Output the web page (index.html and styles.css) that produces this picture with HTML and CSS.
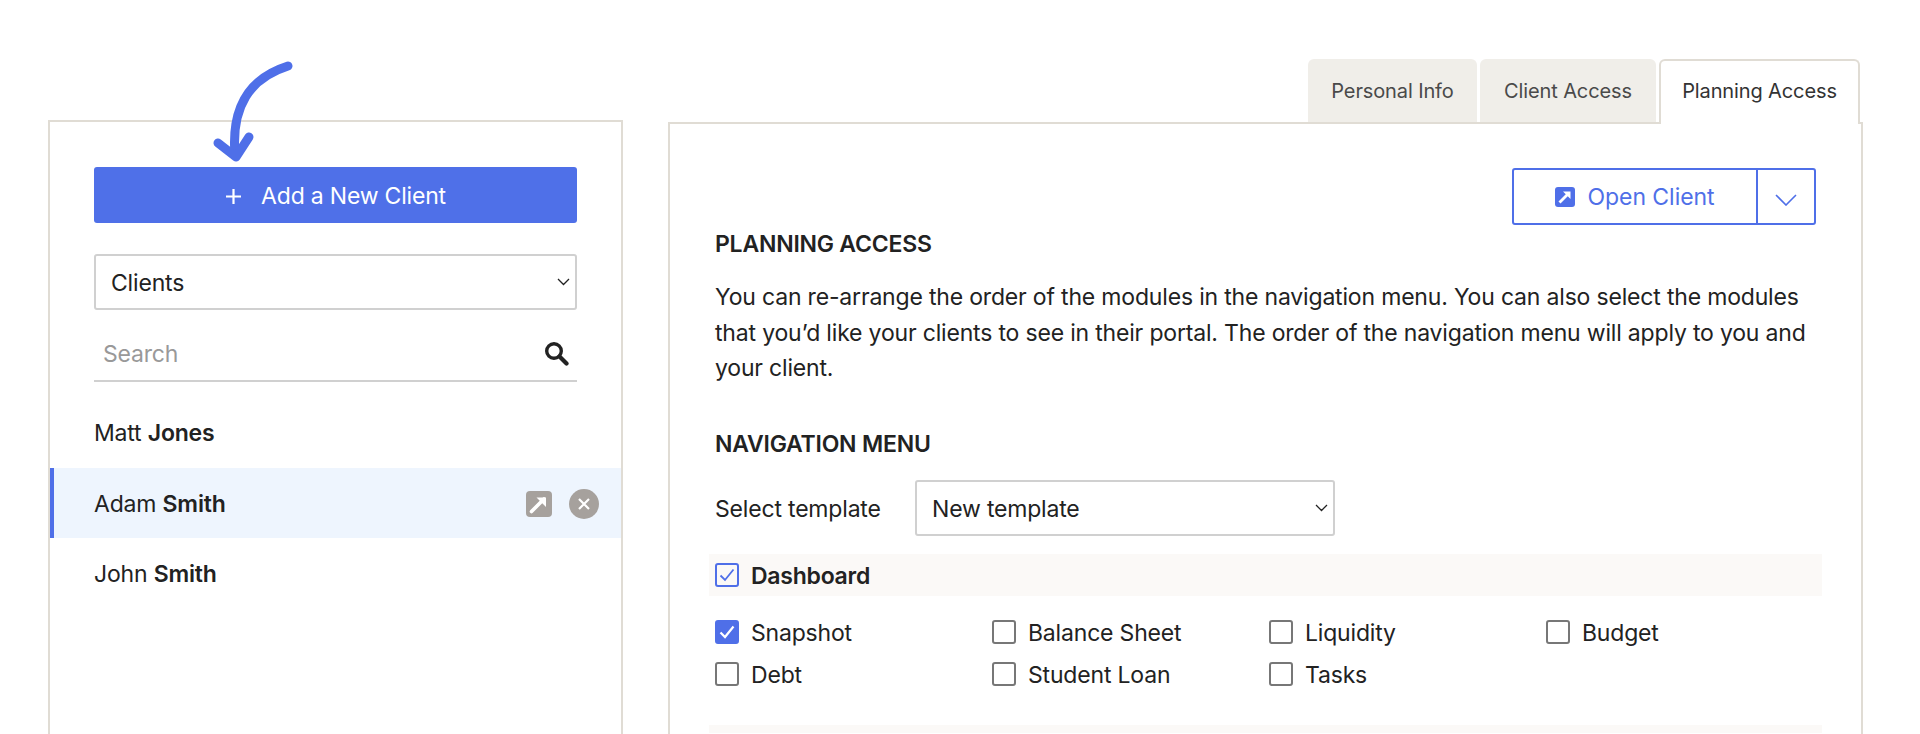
FILE: index.html
```html
<!DOCTYPE html>
<html lang="en">
<head>
<meta charset="utf-8">
<title>Planning Access</title>
<link rel="stylesheet" href="styles.css">
</head>
<body>
<svg class="arrow" width="90" height="115" viewBox="210 50 90 115" fill="none" aria-hidden="true">
  <path d="M288 66C250 78 231 106 235 155" stroke="#4f6fe8" stroke-width="9" stroke-linecap="round"/>
  <path d="M218 143L236 157L249 137" stroke="#4f6fe8" stroke-width="9" stroke-linecap="round" stroke-linejoin="round"/>
</svg>
<main class="page">
  <aside class="side">
    <button class="add"><svg width="17" height="17" viewBox="0 0 17 17"><path d="M8.500 1v15M1 8.500h15" stroke="#fff" stroke-width="2.200"/></svg><span>Add a New Client</span></button>
    <div class="select full"><span class="txt">Clients</span><svg width="13" height="8" viewBox="0 0 13 8" fill="none"><path d="M1 1l5.500 5.500L12 1" stroke="#222" stroke-width="1.300"/></svg></div>
    <div class="search"><span class="txt">Search</span><svg width="25" height="25" viewBox="0 0 25 25" fill="none"><circle cx="10" cy="10" r="7.300" stroke="#222" stroke-width="3.400"/><path d="M15.500 15.500L22.500 22.500" stroke="#222" stroke-width="4.200" stroke-linecap="round"/></svg></div>
    <ul class="clients">
      <li class="client"><span class="txt">Matt <b>Jones</b></span></li>
      <li class="client active"><span class="txt">Adam <b>Smith</b></span>
        <span class="actions">
          <svg width="26" height="26" viewBox="0 0 26 26"><rect width="26" height="26" rx="4" fill="#a6a19d"/><path d="M5.500 20.500L18 8" stroke="#fff" stroke-width="3.600" stroke-linecap="round" fill="none"/><path d="M10.500 6.500h9.500v9.500z" fill="#fff"/></svg>
          <svg width="30" height="30" viewBox="0 0 30 30"><circle cx="15" cy="15" r="15" fill="#a6a19d"/><path d="M10 10l10 10M20 10L10 20" stroke="#fff" stroke-width="2.200"/></svg>
        </span>
      </li>
      <li class="client"><span class="txt">John <b>Smith</b></span></li>
    </ul>
  </aside>
  <section class="main">
    <nav class="tabs">
      <a class="tab t1">Personal Info</a>
      <a class="tab t2">Client Access</a>
      <a class="tab t3 on">Planning Access</a>
    </nav>
    <div class="panel">
      <div class="open-row">
        <div class="open">
          <span class="open-main"><svg width="20" height="20" viewBox="0 0 20 20"><rect width="20" height="20" rx="3" fill="#4f6fe8"/><path d="M4.500 15.500L13 7" stroke="#fff" stroke-width="2.800" fill="none"/><path d="M8 4.500h7.500V12z" fill="#fff"/></svg>Open Client</span>
          <span class="open-more"><svg width="22" height="12" viewBox="0 0 22 12" fill="none"><path d="M1 1l10 10L21 1" stroke="#4f6fe8" stroke-width="1.600"/></svg></span>
        </div>
      </div>
      <h2 class="h first">PLANNING ACCESS</h2>
      <p class="copy">You can re-arrange the order of the modules in the navigation menu. You can also select the modules that you’d like your clients to see in their portal. The order of the navigation menu will apply to you and your client.</p>
      <h2 class="h second">NAVIGATION MENU</h2>
      <div class="template">
        <label class="tpl-label txt">Select template</label>
        <div class="select tpl"><span class="txt">New template</span><svg width="13" height="8" viewBox="0 0 13 8" fill="none"><path d="M1 1l5.500 5.500L12 1" stroke="#222" stroke-width="1.300"/></svg></div>
      </div>
      <div class="band">
        <span class="box outline"><svg width="16" height="14" viewBox="0 0 16 14" fill="none"><path d="M1.500 7.500L6 12L14.500 1.500" stroke="#4f6fe8" stroke-width="1.800"/></svg></span>
        <b class="txt">Dashboard</b>
      </div>
      <div class="grid">
        <div class="opt"><span class="box filled"><svg width="16" height="14" viewBox="0 0 16 14" fill="none"><path d="M1.500 7.500L6 12L14.500 1.500" stroke="#fff" stroke-width="2.200"/></svg></span><span class="txt">Snapshot</span></div>
        <div class="opt"><span class="box"></span><span class="txt">Balance Sheet</span></div>
        <div class="opt"><span class="box"></span><span class="txt">Liquidity</span></div>
        <div class="opt"><span class="box"></span><span class="txt">Budget</span></div>
        <div class="opt"><span class="box"></span><span class="txt">Debt</span></div>
        <div class="opt"><span class="box"></span><span class="txt">Student Loan</span></div>
        <div class="opt"><span class="box"></span><span class="txt">Tasks</span></div>
      </div>
      <div class="band next"></div>
    </div>
  </section>
</main>
</body>
</html>
```
FILE: styles.css
```css
* { box-sizing: border-box; }
html, body { margin: 0; height: 734px; overflow: hidden; background: #fff; }
body { font-family: Inter, "Liberation Sans", sans-serif; font-size: 23px; color: #222; position: relative; letter-spacing: -0.18px; }
.txt { padding-top: 2px; }
.arrow { position: absolute; left: 210px; top: 50px; z-index: 5; }
.page { display: flex; gap: 45px; padding-left: 48px; height: 734px; overflow: hidden; }
.side { width: 575px; margin-top: 120px; height: 614px; border: 2px solid #e0dcd4; border-bottom: 0; padding-top: 45px; }
.add { display: flex; align-items: center; justify-content: center; gap: 19px; width: 483px; height: 56px; margin-left: 44px; border: 0; border-radius: 3px; background: #4f70e8; color: #fff; font: inherit; letter-spacing: -0.2px; padding: 2px 0 0; }
.select { display: flex; align-items: center; justify-content: space-between; height: 56px; border: 2px solid #d0d0d0; border-radius: 3px; padding: 0 5px 0 15px; background: #fff; }
.full { width: 483px; margin: 31px 0 0 44px; }
.search { display: flex; align-items: center; justify-content: space-between; width: 483px; height: 56px; margin: 16px 0 0 44px; padding: 0 8px 0 9px; border-bottom: 2px solid #d0d0d0; color: #999; }
.clients { list-style: none; margin: 15px 0 0; padding: 0; }
.client { display: flex; align-items: center; height: 70.500px; padding-left: 44px; }
.client b, .band b { font-weight: 600; }
.active { background: #eef5fe; border-left: 4px solid #4f6fe8; padding-left: 40px; }
.actions { display: flex; align-items: center; gap: 17px; margin-left: auto; padding: 2px 22px 0 0; }
.main { width: 1195px; height: 675px; display: flex; flex-direction: column; margin-top: 59px; }
.tabs { display: flex; justify-content: flex-end; height: 63px; padding-right: 3px; gap: 3px; }
.tab { display: flex; align-items: center; justify-content: center; height: 63px; background: #f0eee9; border-radius: 6px 6px 0 0; color: #4a4a4a; font-size: 20px; letter-spacing: -0.12px; }
.t1 { width: 169px; }
.t2 { width: 176px; }
.t3 { width: 201px; }
.on { position: relative; z-index: 2; height: 65px; background: #fff; border: 2px solid #e0dcd4; border-bottom: 0; color: #333; padding-bottom: 4px; }
.panel { flex: 1; min-height: 0; border: 2px solid #e0dcd4; border-bottom: 0; padding: 44px 45px 0; }
.open-row { display: flex; justify-content: flex-end; }
.open { display: flex; width: 304px; height: 57px; border: 2px solid #4f6fe8; border-radius: 3px; color: #4f6fe8; font-size: 23px; letter-spacing: -0.05px; }
.open-main { flex: 1; display: flex; align-items: center; justify-content: center; gap: 12px; border-right: 2px solid #4f6fe8; }
.open-more { width: 56px; display: flex; align-items: center; justify-content: center; padding-top: 6px; }
.h { margin: 0; font-size: 23px; line-height: 30px; font-weight: 600; letter-spacing: -0.22px; }
.first { margin-top: 4px; }
.second { margin-top: 42px; }
.copy { margin: 21px 0 0; line-height: 35.500px; }
.template { display: flex; align-items: center; margin-top: 21.500px; }
.tpl-label { width: 200px; flex: none; }
.tpl { width: 420px; }
.band { display: flex; align-items: center; gap: 12px; height: 42px; margin: 18px -6px 0 -6px; padding-left: 6px; background: #fbf9f7; }
.band b { letter-spacing: -0.25px; }
.grid { display: grid; grid-template-columns: repeat(4, 277px); row-gap: 18px; margin-top: 24px; }
.opt { display: flex; align-items: center; gap: 12px; height: 24px; }
.box { flex: none; display: flex; align-items: center; justify-content: center; width: 24px; height: 24px; border: 2px solid #777; border-radius: 3px; }
.outline { border-color: #4f6fe8; }
.filled { background: #4f6fe8; border-color: #4f6fe8; }
.next { margin-top: 39px; height: 8px; }
```
